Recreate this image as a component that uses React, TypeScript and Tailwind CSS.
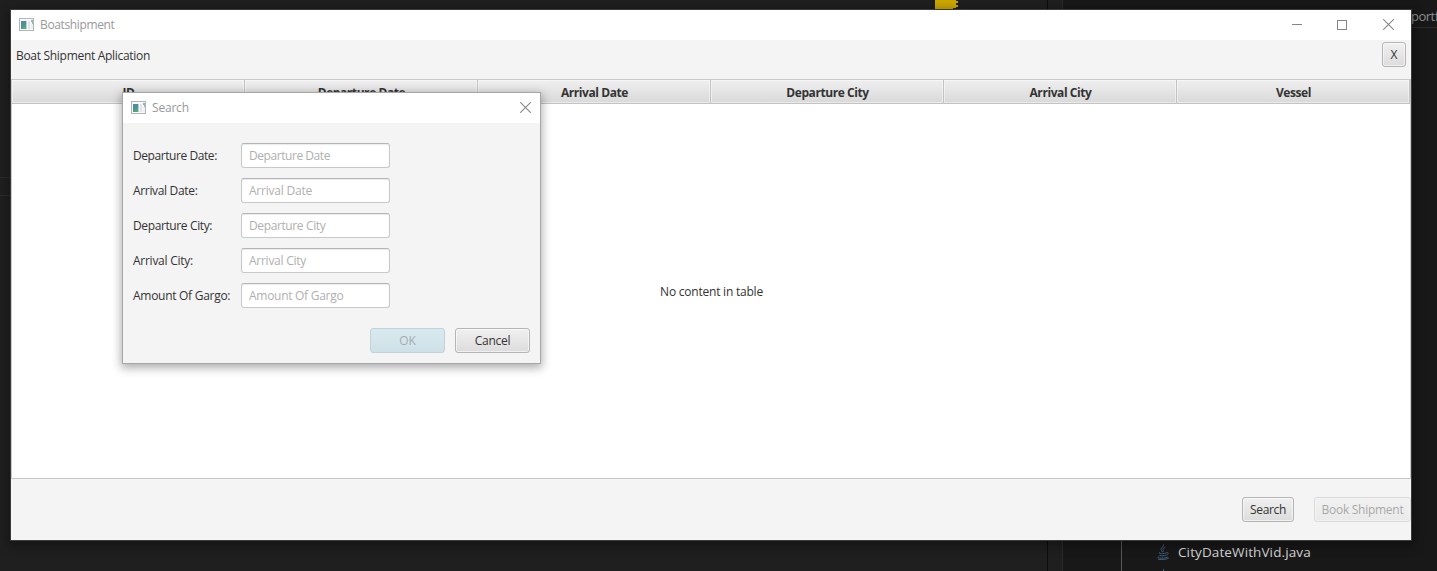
import React from "react";

const columns = ["ID", "Departure Date", "Arrival Date", "Departure City", "Arrival City", "Vessel"];

const fields = [
  { name: "Departure Date", label: "tracking-[-0.43px]", hint: "tracking-[-0.44px]" },
  { name: "Arrival Date", label: "tracking-[-0.33px]", hint: "tracking-[-0.22px]" },
  { name: "Departure City", label: "tracking-[-0.38px]", hint: "tracking-[-0.38px]" },
  { name: "Arrival City", label: "tracking-[-0.26px]", hint: "tracking-[-0.26px]" },
  { name: "Amount Of Gargo", label: "tracking-[-0.28px]", hint: "tracking-[-0.28px]" },
];

function AppIcon() {
  return (
    <svg width="16" height="14" viewBox="0 0 16 14" className="shrink-0">
      <defs>
        <linearGradient id="pane" x1="0" y1="0" x2="0.5" y2="1">
          <stop offset="0" stopColor="#5b84ae" />
          <stop offset="0.5" stopColor="#4d8f98" />
          <stop offset="1" stopColor="#55a878" />
        </linearGradient>
      </defs>
      <rect x="0.5" y="0.5" width="14" height="12" fill="#f7f8f9" stroke="#b2b6bb" />
      <rect x="2" y="3" width="5" height="8" fill="url(#pane)" />
      <rect x="7" y="3" width="1" height="8" fill="#b9cfd3" />
      <rect x="9" y="3" width="2" height="8" fill="#e1e3e5" />
      <rect x="12" y="2" width="2" height="2" fill="#8bb0c0" />
      <rect x="13" y="4" width="1" height="2" fill="#8fc0a5" />
      <rect x="12" y="6" width="2" height="5" fill="#edf0f1" />
    </svg>
  );
}

function CloseGlyph() {
  return (
    <svg width="11" height="11" viewBox="0 0 11 11" fill="none" stroke="#858585" strokeWidth="1.05" className="shrink-0">
      <path d="M0.2 0.2 10.8 10.8M10.8 0.2 0.2 10.8" />
    </svg>
  );
}

function JavaIcon() {
  return (
    <svg width="14" height="16" viewBox="0 0 14 16" fill="none" stroke="#3f5f78" strokeWidth="1" strokeLinecap="round">
      <path d="M7.600.6C8.400 2.600 4.900 3.500 5 5.300c.1 1.100 1.200 1.500 1.400 2.500M9 3.400C6.900 4.300 6.500 5.200 7.300 6.100c.4.5.2 1-.2 1.500" />
      <path d="M3.500 8.500c-1.600.7 1 1.200 3 1.100 1.500 0 2.600-.2 3.300-.4M3.800 11.400c1.600.8 4.200.6 5.700 0M10.600 8.600c2.200-.5 2.400 1.700.1 2.500M2.600 12.800c-4.200 1.600 6.500 2 8.900.4M2.500 15.300c3.500.4 8 .2 10-1.100" />
    </svg>
  );
}

const buttonBase =
  "flex h-[25px] shrink-0 items-center justify-center rounded-[3px] border border-[#b5b5b5] bg-linear-to-b from-[#f0f0f0] to-[#dcdcdc] shadow-[inset_0_0_0_1px_rgba(255,255,255,0.55)] text-[#333]";

function SearchDialog() {
  return (
    <div className="absolute left-[111px] top-[82px] flex h-[272px] w-[419px] flex-col border border-[#a6a6a6] bg-[#f4f4f4] shadow-[0_3px_9px_1px_rgba(0,0,0,0.32)]">
      <div className="flex h-[30px] shrink-0 items-center bg-white pl-2 pr-[9px] pb-[1px]">
        <AppIcon />
        <span className="ml-[5px] grow tracking-[-0.2px] text-[#999]">Search</span>
        <CloseGlyph />
      </div>
      <div className="flex flex-col gap-[10px] px-[10px] pt-5">
        {fields.map((f) => (
          <div key={f.name} className="flex h-[25px] items-center">
            <span className={"w-[108px] whitespace-nowrap pt-px text-[#333] " + f.label}>{f.name}:</span>
            <div
              className={
                "flex h-[25px] w-[149px] items-center whitespace-nowrap rounded-[3px] border border-[#c8c8c8] border-t-[#b4b4b4] bg-white pl-[7px] pt-px text-[#b0b0b0] shadow-[inset_0_1px_1px_rgba(0,0,0,0.08)] " +
                f.hint
              }
            >
              {f.name}
            </div>
          </div>
        ))}
      </div>
      <div className="mt-5 flex justify-end gap-[10px] pr-[10px]">
        <div className="flex h-[25px] w-[75px] items-center justify-center rounded-[3px] border border-[#c0d3da] bg-linear-to-b from-[#d9e9f0] to-[#cfe1e8] pt-px text-[#a3adb1]">OK</div>
        <div className={buttonBase + " w-[75px] pt-px tracking-[-0.3px]"}>Cancel</div>
      </div>
    </div>
  );
}

export default function App() {
  return (
    <div className="relative h-[571px] w-[1437px] overflow-hidden bg-[#1f1f1f] font-['Open_Sans','Noto_Sans',sans-serif] text-[12px] leading-[16px]">
      <div className="absolute left-0 top-[177px] h-px w-[10px] bg-[#2b2b2b]" />
      <div className="absolute left-0 top-[195px] h-px w-[10px] bg-[#2b2b2b]" />
      <div className="absolute right-0 top-0 flex h-full w-[390px] border-l border-[#0c0c0c]">
        <div className="w-[14px] shrink-0" />
        <div className="grow border-l border-[#2b2b2b] bg-[#181818]" />
      </div>
      <div className="absolute left-[1121px] top-[541px] h-[30px] w-px bg-[#585858]" />
      <svg className="absolute left-[935px] top-0" width="24" height="10" viewBox="0 0 24 10">
        <path d="M0 0H21V1H23V3H21V5H23V7H21V8H18V10H0Z" fill="#cca700" />
      </svg>
      <div className="absolute left-[1411px] top-[7px] h-[21px] w-[26px] overflow-hidden whitespace-nowrap border-b border-[#2b2b2b] pt-px text-[13px] tracking-[-0.5px] text-[#8f8f8f]">portf</div>
      <div className="absolute left-[1156px] top-[544px] flex items-center gap-2 text-[13.5px] text-[#d4d4d4]">
        <JavaIcon />
        <span className="whitespace-nowrap tracking-[0.11px]">CityDateWithVid.java</span>
      </div>
      <div className="absolute left-[1163px] top-[569px] h-[2px] w-px bg-[#3f5f78]" />

      <div className="absolute left-[10px] top-[9px] flex h-[532px] w-[1402px] flex-col border border-[#3b3b3b] bg-[#f4f4f4] shadow-[0_3px_10px_2px_rgba(0,0,0,0.35)]">
        <div className="flex h-[30px] shrink-0 items-center bg-white pb-[1px] pl-2 pr-[17px]">
          <AppIcon />
          <span className="ml-[5px] grow tracking-[-0.36px] text-[#999]">Boatshipment</span>
          <div className="flex items-center">
            <div className="h-px w-[10px] bg-[#858585]" />
            <div className="ml-[35px] mr-9 size-[10px] border border-[#858585]" />
            <CloseGlyph />
          </div>
        </div>
        <div className="flex h-[39px] shrink-0 items-start justify-between pl-[5px] pr-[5px] pt-[2px]">
          <span className="pt-[6px] tracking-[-0.3px] text-[#333]">Boat Shipment Aplication</span>
          <div className={buttonBase + " w-6 pt-px"}>X</div>
        </div>
        <div className="flex h-[400px] shrink-0 flex-col border border-[#c8c8c8] bg-white">
          <div className="flex h-6 shrink-0 border-b border-[#c3c3c3] bg-linear-to-b from-[#efefef] to-[#d9d9d9]">
            {columns.map((c) => (
              <div key={c} className="flex h-[23px] w-[233px] shrink-0 items-center justify-center border-r border-[#c3c3c3] pl-[1px] pt-[3px] font-bold tracking-[-0.42px] text-[#333] shadow-[inset_0_0_0_1px_rgba(255,255,255,0.45)]">
                {c}
              </div>
            ))}
          </div>
          <div className="flex grow items-center justify-center pl-px pt-[2px] tracking-[-0.22px] text-[#333]">No content in table</div>
        </div>
        <div className="flex grow items-start justify-end gap-5 overflow-hidden pt-[18px]">
          <div className={buttonBase + " w-[52px] pt-px tracking-[-0.35px]"}>Search</div>
          <div className={buttonBase + " w-[97px] whitespace-nowrap pt-px tracking-[-0.28px] opacity-40"}>Book Shipment</div>
        </div>
        <SearchDialog />
      </div>
    </div>
  );
}
